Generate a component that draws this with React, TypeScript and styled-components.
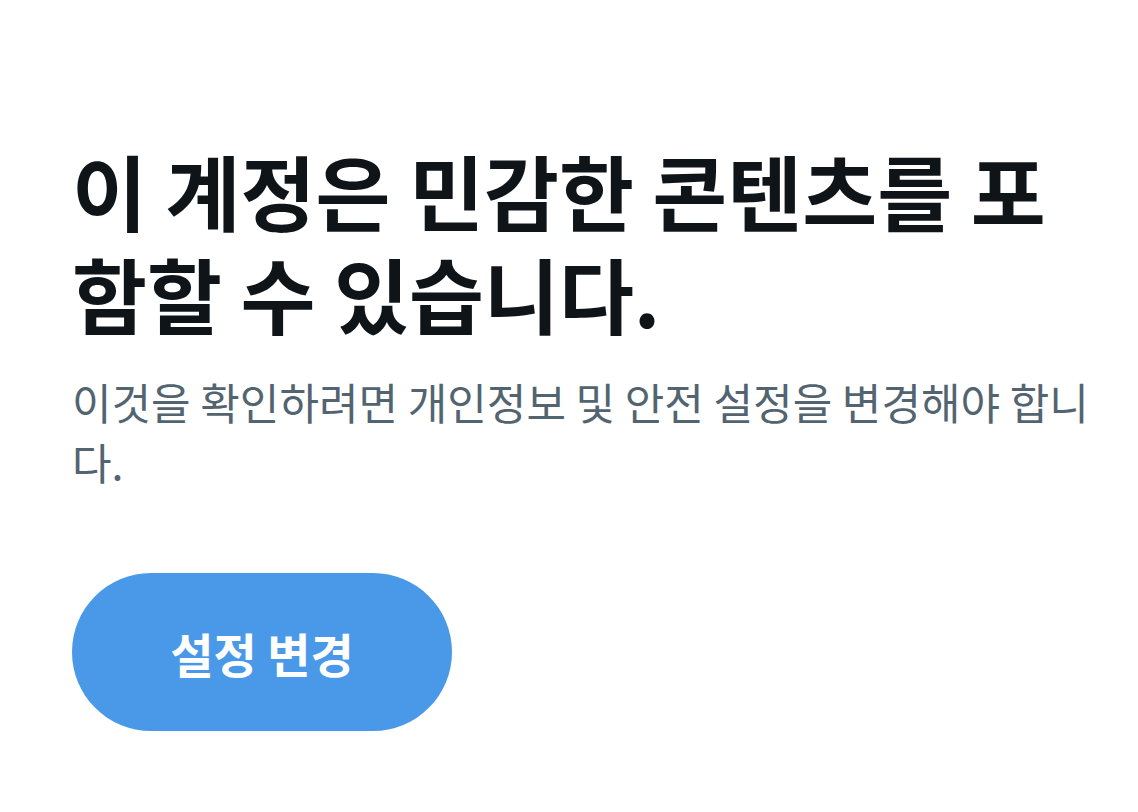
import React from 'react';
import styled, { createGlobalStyle } from 'styled-components';

const GlobalStyle = createGlobalStyle`
    html, body {
        margin: 0;
        padding: 0;
        background: #ffffff;
    }
    body {
        font-family: "Noto Sans CJK KR", "Noto Sans", sans-serif;
    }
`;

const Page = styled.main`
    display: flex;
    flex-direction: column;
    align-items: flex-start;
    padding: 138px 38px 0 72px;
    min-height: 100vh;
    box-sizing: border-box;
`;

const Title = styled.h1`
    margin: 0;
    color: #0f1419;
    font-size: 81.5px;
    line-height: 103px;
    font-weight: 700;
`;

const Subtitle = styled.p`
    margin: 27px 0 0;
    color: #536471;
    font-size: 43px;
    line-height: 60px;
    font-weight: 400;
`;

const PrimaryButton = styled.button`
    margin-top: 82px;
    width: 380px;
    height: 158px;
    border: none;
    border-radius: 9999px;
    background-color: #4a99e9;
    color: #ffffff;
    font-family: inherit;
    font-size: 47px;
    font-weight: 700;
    cursor: pointer;
`;

export default function App() {
    return (
        <>
            <GlobalStyle />
            <Page>
                <Title>이 계정은 민감한 콘텐츠를 포함할 수 있습니다.</Title>
                <Subtitle>이것을 확인하려면 개인정보 및 안전 설정을 변경해야 합니다.</Subtitle>
                <PrimaryButton>설정 변경</PrimaryButton>
            </Page>
        </>
    );
}
